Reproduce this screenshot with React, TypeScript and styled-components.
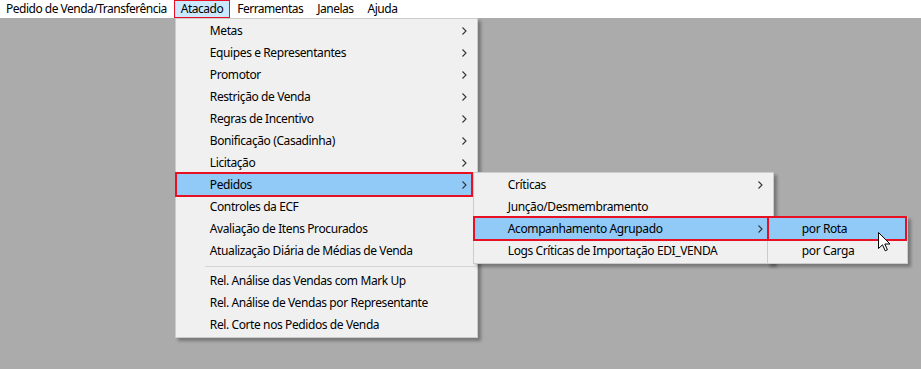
import React from 'react';
import styled, { createGlobalStyle, css } from 'styled-components';

const GlobalStyle = createGlobalStyle`
  html, body {
    margin: 0;
    padding: 0;
  }
  body {
    font-family: "Noto Sans", "Liberation Sans", sans-serif;
    font-size: 12px;
    letter-spacing: -0.4px;
    color: #000;
  }
`;

const Screen = styled.div`
  position: relative;
  width: 921px;
  height: 369px;
  display: flex;
  flex-direction: column;
  background: #ababab;
  overflow: hidden;
`;

const MenuBar = styled.div`
  display: flex;
  height: 18px;
  background: #fff;
  flex-shrink: 0;
`;

const BarItem = styled.div<{ $open?: boolean }>`
  position: relative;
  padding: 0 7px;
  line-height: 18px;
  white-space: nowrap;
  letter-spacing: -0.5px;
  &:first-child {
    padding-left: 6px;
  }
  ${(p) =>
    p.$open &&
    css`
      background: #cce8ff;
      box-shadow: inset 0 0 0 1px #e81123;
    `}
`;

const Workspace = styled.div`
  flex: 1;
  background: #ababab;
`;

const Menu = styled.div<{ $width: number }>`
  position: absolute;
  top: 100%;
  left: 1px;
  width: ${(p) => p.$width}px;
  box-sizing: border-box;
  display: flex;
  flex-direction: column;
  background: #f0f0f0;
  border: 1px solid #cccccc;
  padding: 1px 0;
  box-shadow: 3px 3px 3px rgba(0, 0, 0, 0.3);
  letter-spacing: -0.4px;
  z-index: 1;
`;

const SubMenu = styled(Menu)<{ $shift: number }>`
  top: -2px;
  left: calc(100% - ${(p) => p.$shift}px);
  z-index: 2;
`;

const Row = styled.div<{ $active?: boolean; $markRight?: number }>`
  position: relative;
  display: flex;
  align-items: center;
  justify-content: space-between;
  height: 22px;
  line-height: 22px;
  padding: 0 10px 0 34px;
  white-space: nowrap;
  background: ${(p) => (p.$active ? '#91c9f7' : 'transparent')};
  ${(p) =>
    p.$active &&
    css`
      &::after {
        content: '';
        position: absolute;
        top: -2px;
        bottom: -1px;
        left: -1px;
        right: ${p.$markRight ?? 4}px;
        border: 2px solid #e81123;
        pointer-events: none;
      }
    `}
`;

const Arrow = styled.svg`
  flex-shrink: 0;
`;

const Separator = styled.div`
  height: 1px;
  background: #d5d5d5;
  margin: 4px 2px 3px 29px;
`;

const Cursor = styled.svg`
  position: absolute;
  left: 878px;
  top: 232px;
  z-index: 5;
`;

const Chevron = () => (
  <Arrow width="5" height="8" viewBox="0 0 5 8">
    <path d="M0.5 0.5 L4 4 L0.5 7.5" fill="none" stroke="#333" strokeWidth="1.1" />
  </Arrow>
);

const mainItems = [
  'Metas',
  'Equipes e Representantes',
  'Promotor',
  'Restrição de Venda',
  'Regras de Incentivo',
  'Bonificação (Casadinha)',
  'Licitação',
];

const plainItems = ['Controles da ECF', 'Avaliação de Itens Procurados', 'Atualização Diária de Médias de Venda'];

const reportItems = [
  'Rel. Análise das Vendas com Mark Up',
  'Rel. Análise de Vendas por Representante',
  'Rel. Corte nos Pedidos de Venda',
];

const App: React.FC = () => {
  return (
    <>
      <GlobalStyle />
      <Screen>
        <MenuBar>
          <BarItem>Pedido de Venda/Transferência</BarItem>
          <BarItem $open>
            Atacado
            <Menu $width={303}>
              {mainItems.map((label) => (
                <Row key={label}>
                  {label}
                  <Chevron />
                </Row>
              ))}
              <Row $active>
                Pedidos
                <Chevron />
                <SubMenu $width={301} $shift={4}>
                  <Row>
                    Críticas
                    <Chevron />
                  </Row>
                  <Row>Junção/Desmembramento</Row>
                  <Row $active>
                    Acompanhamento Agrupado
                    <Chevron />
                    <SubMenu $width={141} $shift={6}>
                      <Row $active $markRight={0}>
                        por Rota
                      </Row>
                      <Row>por Carga</Row>
                    </SubMenu>
                  </Row>
                  <Row>Logs Críticas de Importação EDI_VENDA</Row>
                </SubMenu>
              </Row>
              {plainItems.map((label) => (
                <Row key={label}>{label}</Row>
              ))}
              <Separator />
              {reportItems.map((label) => (
                <Row key={label}>{label}</Row>
              ))}
            </Menu>
          </BarItem>
          <BarItem>Ferramentas</BarItem>
          <BarItem>Janelas</BarItem>
          <BarItem>Ajuda</BarItem>
        </MenuBar>
        <Workspace />
        <Cursor width="13" height="20" viewBox="0 0 13 20">
          <path
            d="M0.5 0.5 L0.5 16.5 L4.5 12.8 L7.2 18.8 L9.4 17.8 L6.8 12 L12 12 Z"
            fill="#fff"
            stroke="#000"
            strokeWidth="1"
            strokeLinejoin="miter"
          />
        </Cursor>
      </Screen>
    </>
  );
};

export default App;
